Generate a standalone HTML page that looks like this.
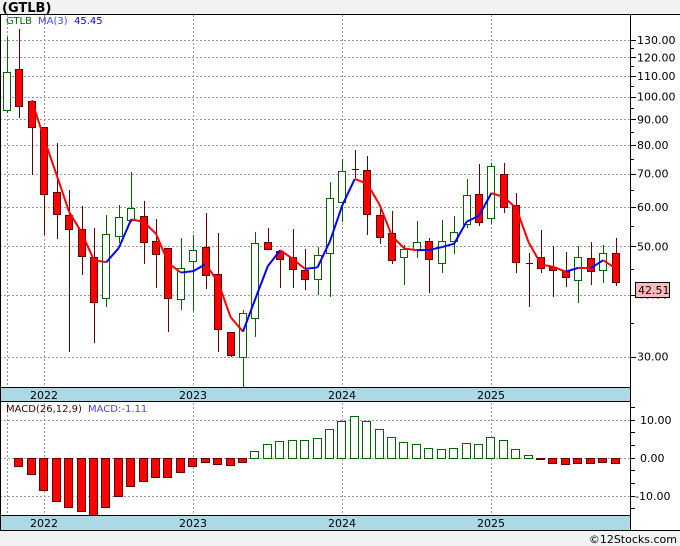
<!DOCTYPE html>
<html><head><meta charset="utf-8"><style>
body{margin:0;background:#f2f2f2;width:680px;height:546px;overflow:hidden;font-family:"DejaVu Sans","Liberation Sans",sans-serif}
svg{display:block}
</style></head><body>
<svg id="s" width="680" height="546" xmlns="http://www.w3.org/2000/svg" font-family="DejaVu Sans, Liberation Sans, sans-serif"></svg>
<script>
const S=document.getElementById('s');let h='';
h+='<rect x="0" y="0" width="680" height="546" fill="#f2f2f2"/>';
h+='<text x="2" y="12" font-size="13" font-weight="bold" fill="#000">(GTLB)</text>';
h+='<rect x="0" y="14" width="680" height="516" fill="#fff"/>';
h+='<line x1="0" y1="14.5" x2="680" y2="14.5" stroke="#000"/>';
const Y=p=>40+216*Math.log(130/p);
const lv=[130,120,110,100,90,80,70,60,50,40,30];
lv.forEach(p=>{const y=Math.round(Y(p))+.5;h+=`<line x1="0" y1="${y}" x2="630" y2="${y}" stroke="#999" stroke-dasharray="2,2"/>`;});
[420,458,496].forEach(y=>{h+=`<line x1="0" y1="${y+.5}" x2="630" y2="${y+.5}" stroke="#999" stroke-dasharray="2,2"/>`;});
[7,44,193,342,491].forEach(x=>{h+=`<line x1="${x+.5}" y1="15" x2="${x+.5}" y2="515" stroke="#999" stroke-dasharray="2,2"/>`;});
const C=[[72,110,37,113,'g'],[69,106,29,118,'r'],[101,127,100,175,'r'],[127,194,127,235,'r'],[192,214,143,239,'r'],[215,229,190,352,'r'],[229,256,206,275,'r'],[257,302,228,343,'r'],[234,298,215,307,'g'],[217,236,205,243,'g'],[208,220,172,222,'g'],[216,242,201,264,'r'],[241,254,219,288,'r'],[248,298,248,332,'r'],[268,299,238,310,'g'],[250,261,235,311,'g'],[247,275,213,289,'r'],[274,329,233,352,'r'],[332,355,332,357,'r'],[313,357,310,388,'g'],[243,318,232,337,'g'],[242,249,228,249,'r'],[251,259,251,288,'r'],[257,269,229,288,'r'],[270,279,249,290,'r'],[255,279,247,295,'g'],[198,253,182,297,'g'],[171,202,159,222,'g'],[169,169,150,178,'d'],[170,214,156,235,'r'],[215,237,207,244,'r'],[233,260,211,264,'r'],[249,257,245,285,'g'],[242,249,221,258,'g'],[241,259,238,293,'r'],[241,263,220,273,'g'],[232,241,216,254,'g'],[195,224,179,228,'g'],[194,222,164,226,'r'],[166,218,163,224,'g'],[174,207,163,213,'r'],[205,262,193,273,'r'],[263,263,253,307,'d'],[257,268,230,273,'r'],[267,270,246,297,'r'],[271,277,252,287,'r'],[257,280,246,303,'g'],[258,271,242,285,'r'],[253,270,245,283,'g'],[253,282,238,286,'r']];
const X=i=>7+12.42*i;
const P=y=>130*Math.exp(-(y-40)/216);
const cl=C.map(c=>c[4]=='g'?c[0]:c[1]);
C.forEach((c,i)=>{const x=Math.round(X(i));const g=c[4]=='g';const wc=g?'#060':'#600';
h+=`<line x1="${x+.5}" y1="${c[2]}" x2="${x+.5}" y2="${c[3]}" stroke="${wc}"/>`;
if(c[4]=='d'){h+=`<line x1="${x-3}" y1="${c[0]+.5}" x2="${x+4}" y2="${c[0]+.5}" stroke="#600"/>`;}
else h+=`<rect x="${x-3.5}" y="${c[0]+.5}" width="7" height="${Math.max(1,c[1]-c[0])}" fill="${g?'#fff':'#f00'}" stroke="${wc}"/>`;});
let m=[];for(let i=2;i<C.length;i++){m.push([X(i),Y((P(cl[i])+P(cl[i-1])+P(cl[i-2]))/3)]);}
for(let k=1;k<m.length;k++){const up=m[k][1]<m[k-1][1];h+=`<line x1="${m[k-1][0]}" y1="${m[k-1][1]}" x2="${m[k][0]}" y2="${m[k][1]}" stroke="${up?'#00f':'#f00'}" stroke-width="2"/>`;}
h+='<text x="6" y="24" font-size="10" fill="#060">GTLB</text><text x="38" y="24" font-size="10" fill="#44f">MA(3)</text><text x="74" y="24" font-size="10" fill="#00f">45.45</text>';
h+='<rect x="631" y="15" width="49" height="515" fill="#fff"/>';
h+='<line x1="630.5" y1="14" x2="630.5" y2="530" stroke="#000"/><line x1="0.5" y1="14" x2="0.5" y2="530" stroke="#000"/>';
for(let p=30;p<=130;p+=5){const y=Math.round(Y(p))+.5;h+=`<line x1="630" y1="${y}" x2="${p%10?634:636}" y2="${y}" stroke="#000"/>`;}
lv.forEach(p=>{const y=Y(p);h+=`<text x="637" y="${y+4}" font-size="11" fill="#000">${p}.00</text>`;});
h+=`<rect x="635.5" y="282.5" width="34" height="15" fill="#fbb" stroke="#000"/><text x="638" y="294" font-size="11" fill="#000">42.51</text>`;
const M=[null,466,474,490,501,507,511,515,507,496,486,481,477,477,472,466,462,464,465,462,451,444,441,440,440,438,429,421,416,421,429,437,442,444,448,449,448,443,444,437,440,449,455,459,463,464,463,463,462,463];
M.forEach((v,i)=>{if(v==null)return;const x=Math.round(X(i));if(i<20||i>=43){h+=`<rect x="${x-4.5}" y="458.5" width="8" height="${Math.max(1,v-458)}" fill="#f00" stroke="#600"/>`;}else{h+=`<rect x="${x-4.5}" y="${v+.5}" width="8" height="${458-v}" fill="#fff" stroke="#060"/>`;}});
[407,420,432,445,458,470,483,496,508].forEach(y=>{h+=`<line x1="630" y1="${y+.5}" x2="635" y2="${y+.5}" stroke="#000"/>`;});
[[420,'10.00',640],[458,'0.00',640],[496,'-10.00',635]].forEach(a=>{h+=`<text x="${a[2]}" y="${a[0]+4}" font-size="11" fill="#000">${a[1]}</text>`;});
h+='<text x="6" y="412" font-size="10" fill="#400">MACD(26,12,9)</text><text x="88" y="412" font-size="10" fill="#44f">MACD:-1.11</text>';
[[387,401],[515,530]].forEach(b=>{h+=`<rect x="0.5" y="${b[0]+.5}" width="630" height="${b[1]-b[0]}" fill="#add8e6" stroke="#000"/>`;
[[44,'2022'],[193,'2023'],[342,'2024'],[491,'2025']].forEach(t=>{h+=`<text x="${t[0]}" y="${b[0]+12}" font-size="11" text-anchor="middle" fill="#000">${t[1]}</text>`;});});
h+='<rect x="0" y="531" width="680" height="15" fill="#f2f2f2"/><line x1="0" y1="530.5" x2="680" y2="530.5" stroke="#000"/>';
h+='<text x="677" y="543" font-size="11" text-anchor="end" fill="#000">©12Stocks.com</text>';
S.innerHTML=h;
</script>
</body></html>
